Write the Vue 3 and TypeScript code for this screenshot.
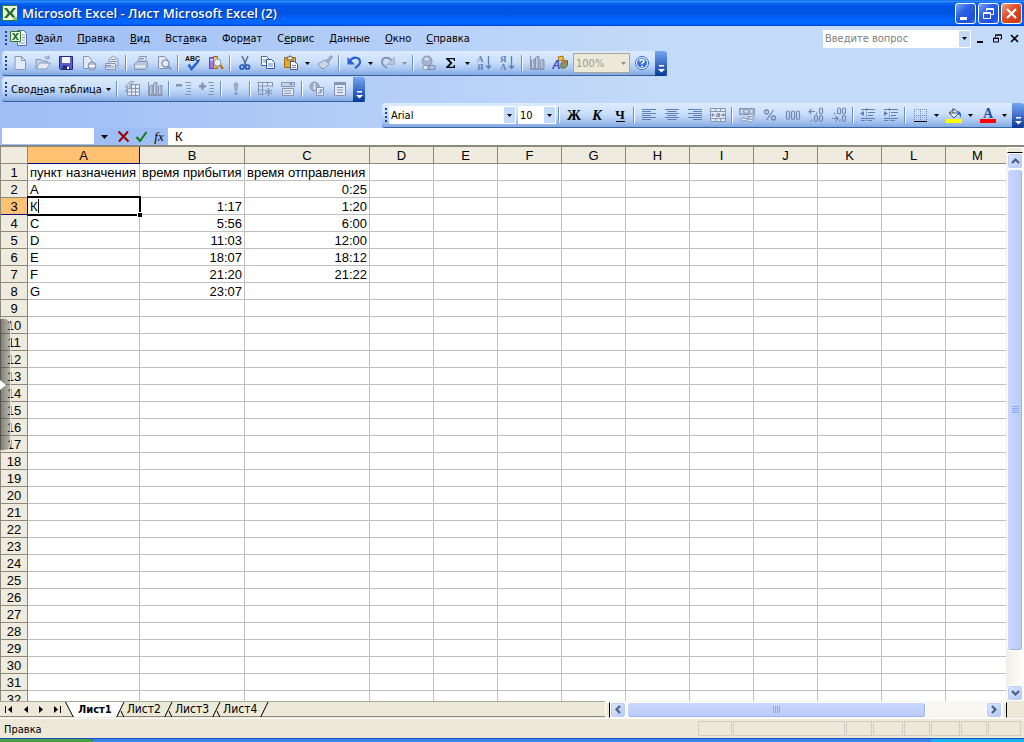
<script setup lang="ts">
import { ref } from 'vue'

interface ToolItem {
  kind: 'btn' | 'sep' | 'drop' | 'zoom' | 'font' | 'size' | 'pivot'
  icon?: string
  label?: string
  off?: boolean
}

const b = (icon: string, label: string): ToolItem => ({ kind: 'btn', icon, label })
const sep: ToolItem = { kind: 'sep' }
const drop = (off = false): ToolItem => ({ kind: 'drop', off })

const menus = [
  ['', 'Ф', 'айл'],
  ['', 'П', 'равка'],
  ['', 'В', 'ид'],
  ['Вст', 'а', 'вка'],
  ['Фор', 'м', 'ат'],
  ['С', 'е', 'рвис'],
  ['', 'Д', 'анные'],
  ['', 'О', 'кно'],
  ['', 'С', 'правка'],
]

const standard: ToolItem[] = [
  b('page', 'Создать'), b('open', 'Открыть'), b('save', 'Сохранить'), b('perm', 'Разрешения'), b('mail', 'Сообщение'), sep,
  b('print', 'Печать'), b('preview', 'Просмотр'), sep,
  b('spell', 'Орфография'), b('research', 'Справочные материалы'), sep,
  b('cut', 'Вырезать'), b('copy', 'Копировать'), b('paste', 'Вставить'), drop(), b('brush', 'Формат по образцу'), sep,
  b('undo', 'Отменить'), drop(), b('redo', 'Вернуть'), drop(true), sep,
  b('link', 'Гиперссылка'), b('sigma', 'Автосумма'), drop(), b('sortAsc', 'По возрастанию'), b('sortDesc', 'По убыванию'), sep,
  b('chart', 'Диаграмма'), b('draw', 'Рисование'), { kind: 'zoom' }, b('help', 'Справка'),
]

const pivot: ToolItem[] = [
  { kind: 'pivot' }, sep, b('pivotFormat', 'Формат отчета'), b('chart', 'Мастер диаграмм'), sep,
  b('minus', 'Скрыть детали'), b('plus', 'Отобразить детали'), sep, b('bang', 'Обновить'), sep,
  b('tableStar', 'Скрытые элементы'), b('fieldBox', 'Всегда показывать'), sep,
  b('info', 'Параметры поля'), b('listBox', 'Список полей'),
]

const format: ToolItem[] = [
  { kind: 'font' }, { kind: 'size' }, sep,
  b('bold', 'Полужирный'), b('italic', 'Курсив'), b('underline', 'Подчеркнутый'), sep,
  b('alignL', 'По левому краю'), b('alignC', 'По центру'), b('alignR', 'По правому краю'), b('merge', 'Объединить'), sep,
  b('money', 'Денежный формат'), b('percent', 'Процентный формат'), b('thousand', 'Разделители'), b('decUp', 'Увеличить разрядность'), b('decDown', 'Уменьшить разрядность'), sep,
  b('indentL', 'Уменьшить отступ'), b('indentR', 'Увеличить отступ'), sep,
  b('borders', 'Границы'), drop(), b('fill', 'Цвет заливки'), drop(), b('color', 'Цвет шрифта'), drop(),
]

const bars = [
  { name: 'standard', items: standard },
  { name: 'pivot', items: pivot },
  { name: 'format', items: format },
]

const G = '#8795b5'
const L = '#e4eaf5'
const D = '#5f7fb5'
const icons: Record<string, string> = {
  page: `<path d="M3 1.5h6.500l4 4v9H3z" fill="${L}" stroke="${G}"/><path d="M9.500 1.500v4h4" fill="none" stroke="${G}"/>`,
  open: `<path d="M1 13.500V4.500h5l1 1.500h5v2" fill="#c5d0e5" stroke="${G}"/><path d="M1 14l3.500-6h11l-4 6z" fill="${L}" stroke="${G}"/><path d="M9 3q3-3 5 0M14 .5v3h-3" fill="none" stroke="${G}"/>`,
  save: `<path d="M1.500 1.500h13v13h-12l-1-1z" fill="#5a5fd0" stroke="#26267c"/><path d="M4 2h8v6H4z" fill="#f4f6ff"/><path d="M4.500 10.500h7v4h-7z" fill="#26267c"/><path d="M9 11.500h2v2.500H9z" fill="#fff"/>`,
  perm: `<path d="M2.500 1.500h5l3 3v9h-8z" fill="${L}" stroke="${G}"/><circle cx="11" cy="11" r="4" fill="#b4c0da" stroke="${G}"/><path d="M8.500 11h5" stroke="#fff" stroke-width="2"/>`,
  mail: `<path d="M5 6V4l4.500-3L14 4v7H5z" fill="${L}" stroke="${G}"/><path d="M7 4.500h5M6 6.500h7" stroke="${G}"/><path d="M1.500 8.500h10v6h-10z" fill="#dde4f2" stroke="${G}"/><path d="M2 12h8M2 10.500h5" fill="none" stroke="${G}"/><path d="M12 11.500h3v3h-3z" fill="#b4c0da"/>`,
  print: `<path d="M5 6.500l1.500-5h7l-1.500 5z" fill="${L}" stroke="${G}"/><path d="M1.500 9l3-2.500h10V12l-2 2.500h-11z" fill="#bac5dc" stroke="${G}"/><path d="M2 10.500h10v2H2z" fill="${L}"/><path d="M7 3.500h4M6.500 5h4" stroke="${G}"/>`,
  preview: `<path d="M2.500 1.500h6l3 3v9h-9z" fill="${L}" stroke="${G}"/><circle cx="9.500" cy="8.500" r="3.500" fill="#e9effa" stroke="${G}" stroke-width="1.500"/><path d="M12 11l3 3.500" stroke="${G}" stroke-width="2"/>`,
  spell: `<text x="0" y="6" font-family="Liberation Sans, sans-serif" font-size="7" font-weight="bold" fill="#111">ABC</text><path d="M3.500 9.500l3 4.500 7-8" fill="none" stroke="#2563cf" stroke-width="2.500"/>`,
  research: `<path d="M1.500 2.500h4v11h-4z" fill="#a577e0" stroke="#6a3dac"/><path d="M5.500 1.500h4v12h-4z" fill="#e3b548" stroke="#a06d20"/><path d="M2 5h3M6 4h3" stroke="#fff"/><circle cx="9.500" cy="7.500" r="3.500" fill="#e8f4ff" stroke="#8b97a8"/><path d="M12 10l3 4" stroke="#b8761b" stroke-width="2.500"/>`,
  cut: `<path d="M5 1l4 9M11 1L7 10" stroke="#5d6f92" stroke-width="1.500"/><circle cx="5" cy="12" r="2" fill="none" stroke="#2458b8" stroke-width="1.700"/><circle cx="10.500" cy="12" r="2" fill="none" stroke="#2458b8" stroke-width="1.700"/>`,
  copy: `<path d="M1.500 1.500h5l3 3v6h-8z" fill="#fff" stroke="#4566a8"/><path d="M6.500 4.500h5l3 3v6h-8z" fill="#fff" stroke="#3558a4"/><path d="M8 9h5M8 11h5M3 5h3M3 7h3" stroke="#5f86d0"/>`,
  paste: `<path d="M1.500 2.500h11v10h-11z" fill="#e8a92c" stroke="#a36a14"/><path d="M4 2h2l1-1.500L8 2h2v3H4z" fill="#ece3c4" stroke="#6c6046"/><path d="M7.500 6.500h4l3 3v5h-7z" fill="#fff" stroke="#4a5878"/><path d="M9 10.500h4M9 12.500h4" stroke="#6a80a8"/>`,
  brush: `<path d="M9 6l5-5.500 1.500 1.500L11 8z" fill="#a9b5cf" stroke="${G}"/><path d="M8 5l4 4-5 5-1-1-1 1L1 9z" fill="#ccd5e6" stroke="${G}"/>`,
  undo: `<path d="M4 6c3-5 10-4 10 1 0 3-2 4-5 6" fill="none" stroke="#2c62cf" stroke-width="2.200"/><path d="M1.500 2v7.500H9z" fill="#2c62cf"/>`,
  redo: `<path d="M12 6C9 1 2 2 2 7c0 3 2 4 5 6" fill="none" stroke="${G}" stroke-width="2"/><path d="M14.500 2v7.500H7z" fill="#b8c3da" stroke="${G}" stroke-width=".5"/>`,
  link: `<circle cx="7" cy="6" r="5" fill="#a7b3cf" stroke="${G}"/><path d="M4 4q3-3 5 0-2 3-5 0" fill="#dde4f1"/><rect x="3" y="10.500" width="7" height="4" rx="2" fill="${L}" stroke="${G}"/><rect x="8" y="10.500" width="7" height="4" rx="2" fill="none" stroke="${G}" stroke-width="1.500"/>`,
  sigma: `<path d="M3 3h9v3h-1l-.7-1.700H6.200L9.500 8 6 11.700h4.300L11 10h1v3H3v-1l4-4-4-4z" fill="#101018"/>`,
  sortAsc: `<g fill="${D}" font-family="Liberation Serif, serif" font-size="9" font-weight="bold"><text x="0" y="7">А</text><text x="0" y="15">Я</text></g><path d="M11.500 1v12M9 10.500l2.500 3 2.500-3" fill="none" stroke="${D}" stroke-width="1.300"/>`,
  sortDesc: `<g fill="${D}" font-family="Liberation Serif, serif" font-size="9" font-weight="bold"><text x="0" y="7">Я</text><text x="0" y="15">А</text></g><path d="M11.500 1v12M9 10.500l2.500 3 2.500-3" fill="none" stroke="${D}" stroke-width="1.300"/>`,
  chart: `<path d="M1.500 1v13.500h14" stroke="${G}" fill="none"/><path d="M2.500 5.500l1.500-1h2v9h-3.500zM6.500 2.500l1.500-1h2v12H6.500zM11.500 5.500l1.500-1h2v9h-3.500z" fill="#c7d1e6" stroke="${G}"/><path d="M5 5v8M9 2v11M14 5v8" stroke="${G}"/>`,
  draw: `<path d="M6.500 1.500h5v4h-5z" fill="#f2c43a" stroke="#a0761b" transform="rotate(-12 9 4)"/><path d="M9 8l3-2.500h3.500v5L13 13H9z" fill="#8a9a64" stroke="#59684a"/><path d="M11 4l4 2-3 3" fill="#cc7044"/><text x="0" y="14" font-family="Liberation Sans, sans-serif" font-size="12" font-style="italic" font-weight="bold" fill="#4a4fc0">A</text>`,
  help: `<circle cx="8" cy="8" r="6.500" fill="#fff" stroke="#2e64ce"/><circle cx="8" cy="8" r="5" fill="#3a74e0"/><path d="M6 6.500q0-2 2-2t2 1.700c0 1.300-2 1.300-2 3M8 10.700v1.500" fill="none" stroke="#fff" stroke-width="1.600"/>`,
  pivotFormat: `<path d="M3.500 3.500h12v11h-12z" fill="${L}" stroke="${G}"/><path d="M4 7.500h11M4 11h11M7.500 4v10M11.500 4v10" stroke="${G}"/><path d="M7 0L1 6h3l-3 5 7-6H5l5-5z" fill="#d6deee" stroke="${G}"/>`,
  minus: `<path d="M0 3h6v2.500H0z" fill="${G}"/><path d="M9 1.500h6M10.500 4.500H15M10.500 7.500H15M10.500 10.500H15M9 13.500h6" stroke="${G}"/>`,
  plus: `<path d="M0 4h7v2.500H0zM2.200 1.800h2.500v7H2.200z" fill="${G}"/><path d="M9 1.500h6M10.500 4.500H15M10.500 7.500H15M10.500 10.500H15M9 13.500h6" stroke="${G}"/>`,
  bang: `<path d="M6 3q2-3 4 0L9 9.500H7z" fill="#a2b0cd" stroke="${G}" stroke-width=".7"/><circle cx="8" cy="12.500" r="1.500" fill="${G}"/>`,
  tableStar: `<path d="M1 1.500h14v4H1z" fill="${L}"/><path d="M.5 1.500h15V6M1.500 1v12.500H7M1 5h14M5.500 2v11M1 9h6M10.500 2v3" stroke="${G}" fill="none"/><path d="M11.500 7v8M8 9l7 4M8 13l7-4" stroke="${G}" stroke-width="1.400"/>`,
  fieldBox: `<path d="M1.500 1.500h13v4h-13z" fill="#c8d2e6" stroke="${G}"/><path d="M9 2.500h4l-2 2z" fill="${D}"/><path d="M2.500 7.500h11v7h-11z" fill="${L}" stroke="${G}"/><path d="M4 10h7M4 12.500h7" stroke="${G}"/>`,
  info: `<circle cx="5.500" cy="5.500" r="4.500" fill="#9eadca" stroke="${G}"/><path d="M5.500 4.500v4M5.500 2.200v1.500" stroke="#fff" stroke-width="1.500"/><path d="M7.500 6.500h7v8h-7z" fill="${L}" stroke="${G}"/><path d="M9 12h3V9M10.500 10L12 8.500l1.500 1.500" fill="none" stroke="${D}"/>`,
  listBox: `<path d="M2.500 1.500h11v13h-11z" fill="${L}" stroke="${G}"/><path d="M3 3h10" stroke="${G}" stroke-width="2"/><path d="M5 6.500h6M5 9h6M5 11.500h6" stroke="${G}"/>`,
  bold: `<text x="8" y="13" text-anchor="middle" font-family="Liberation Serif, serif" font-size="14" font-weight="bold">Ж</text>`,
  italic: `<text x="8" y="13" text-anchor="middle" font-family="Liberation Serif, serif" font-size="14" font-weight="bold" font-style="italic">К</text>`,
  underline: `<text x="8" y="12" text-anchor="middle" font-family="Liberation Serif, serif" font-size="13" font-weight="bold">Ч</text><path d="M4 14.500h9" stroke="#111"/>`,
  alignL: `<path d="M1 2.500h14M1 4.500h9M1 6.500h14M1 8.500h9M1 10.500h14M1 12.500h9" stroke="${D}"/>`,
  alignC: `<path d="M1 2.500h14M3.500 4.500h9M1 6.500h14M3.500 8.500h9M1 10.500h14M3.500 12.500h9" stroke="${D}"/>`,
  alignR: `<path d="M1 2.500h14M6 4.500h9M1 6.500h14M6 8.500h9M1 10.500h14M6 12.500h9" stroke="${D}"/>`,
  merge: `<path d="M.5 1.500h15v13H.5z" fill="${L}" stroke="${G}"/><path d="M.5 4.500h15M.5 11.500h15M5.500 1v3M10.500 1v3M5.500 12v3M10.500 12v3" stroke="${G}"/><path d="M1 8h4M11 8h4M2.500 6.500v3M13.500 6.500v3" stroke="${D}"/><text x="8" y="10" text-anchor="middle" font-family="Liberation Serif, serif" font-size="9" font-weight="bold" fill="${D}">a</text>`,
  money: `<path d="M.5 1.500h15v6H.5z" fill="#a9b8d6" stroke="${G}"/><circle cx="7" cy="4.500" r="2" fill="${L}" stroke="${G}"/><path d="M2.500 3v3M12.500 3v3" stroke="${L}"/><ellipse cx="12" cy="8.500" rx="3" ry="1.500" fill="${L}" stroke="${G}"/><ellipse cx="12" cy="11" rx="3" ry="1.500" fill="${L}" stroke="${G}"/><ellipse cx="11" cy="13.500" rx="3" ry="1.500" fill="${L}" stroke="${G}"/><ellipse cx="5" cy="12.500" rx="3" ry="1.500" fill="${L}" stroke="${G}"/>`,
  percent: `<circle cx="4.500" cy="5" r="2" fill="none" stroke="#7387b0" stroke-width="1.300"/><circle cx="11.500" cy="11" r="2" fill="none" stroke="#7387b0" stroke-width="1.300"/><path d="M11.500 3l-7 10" stroke="#7387b0" stroke-width="1.300"/>`,
  thousand: `<g fill="none" stroke="#7387b0" stroke-width="1.200"><rect x="1.500" y="4" width="3" height="8.500" rx="1.500"/><rect x="6.500" y="4" width="3" height="8.500" rx="1.500"/><rect x="11.500" y="4" width="3" height="8.500" rx="1.500"/></g>`,
  decUp: `<g fill="none" stroke="#7387b0" stroke-width="1.200"><path d="M1 4.500h6M3.500 2L1 4.500 3.500 7M9 5.500L8 7.500M4 12.500l-1 2"/><rect x="11.500" y="1" width="3" height="6" rx="1.500"/><rect x="6.500" y="8.500" width="3" height="6" rx="1.500"/><rect x="11.500" y="8.500" width="3" height="6" rx="1.500"/></g>`,
  decDown: `<g fill="none" stroke="#7387b0" stroke-width="1.200"><path d="M1 11.500h6M4.500 9L7 11.500 4.500 14M4 5.500l-1 2M9.500 12.500l-1 2"/><rect x="6.500" y="1" width="3" height="6" rx="1.500"/><rect x="11.500" y="1" width="3" height="6" rx="1.500"/><rect x="11.500" y="8.500" width="3" height="6" rx="1.500"/></g>`,
  indentL: `<path d="M1 2.500h14M8 5.500h7M8 8.500h5M1 11.500h14M1 13.500h4M8 13.500h4" stroke="${D}"/><path d="M4 4v5L0 6.500z" fill="${D}"/><path d="M6.500 1v14" stroke="${D}" stroke-dasharray="1 1"/>`,
  indentR: `<path d="M1 2.500h14M8 5.500h7M8 8.500h5M1 11.500h14M1 13.500h4M8 13.500h4" stroke="${D}"/><path d="M1 4v5l4-2.500z" fill="${D}"/><path d="M6.500 1v14" stroke="${D}" stroke-dasharray="1 1"/>`,
  borders: `<path d="M2 2.500h13M2 8.500h13M2.500 2v12M8.500 2v12M14.500 2v12" stroke="#7286ac" stroke-dasharray="1 1"/><path d="M2 14.500h13" stroke="#000"/>`,
  fill: `<path d="M3 6l5-4 5 4-5 5z" fill="#e6edf6" stroke="#44566e"/><path d="M7 1v5M3 6h9" stroke="#44566e"/><path d="M12 4q4 1 3 7-1-3-3-4" fill="#2f66c6"/><path d="M0 12h16v4H0z" fill="#ff0"/>`,
  color: `<text x="8" y="11" text-anchor="middle" font-family="Liberation Serif, serif" font-size="14" font-weight="bold" fill="#27509c">A</text><path d="M0 12h16v4H0z" fill="#f00"/>`,
}

const columns = [
  { name: 'A', width: 112 },
  { name: 'B', width: 105 },
  { name: 'C', width: 125 },
  ...'DEFGHIJKLM'.split('').map((name) => ({ name, width: 64 })),
]
const tableWidth = 27 + columns.reduce((sum, c) => sum + c.width, 0)

const data: string[][] = [
  ['пункт назначения', 'время прибытия', 'время отправления'],
  ['A', '', '0:25'],
  ['', '1:17', '1:20'],
  ['C', '5:56', '6:00'],
  ['D', '11:03', '12:00'],
  ['E', '18:07', '18:12'],
  ['F', '21:20', '21:22'],
  ['G', '23:07', ''],
]
const cell = (r: number, c: number): string => data[r - 1]?.[c] ?? ''
const entry = ref('К')
const query = ref('')
const nameBox = ref('')
const sheets = ['Лист1', 'Лист2', 'Лист3', 'Лист4']
const panes = [34, 112, 26, 30, 26, 29, 26, 33]
const navs = [
  { label: 'Первый лист', d: 'M1 1h1v7H1zM8 1v7L4 4.500z' },
  { label: 'Предыдущий лист', d: 'M7 1v7L3 4.500z' },
  { label: 'Следующий лист', d: 'M2 1v7l4-3.500z' },
  { label: 'Последний лист', d: 'M7 1h1v7H7zM1 1v7l4-3.500z' },
]
</script>

<template>
  <div class="app">
    <header class="title">
      <svg class="logo" width="16" height="16" viewBox="0 0 16 16">
        <path d="M.5.5h15v15H.5z" fill="#e9f5df" stroke="#2f7d32" />
        <path d="M2 3h3l3 4 3-4h3l-4 5 4 5h-3L8 9.500 5 13H2l4-5z" fill="#226f2c" />
        <path d="M11 12h4v3h-4z" fill="#8cc47c" />
      </svg>
      <h1>Microsoft Excel - Лист Microsoft Excel (2)</h1>
      <div class="winbtns">
        <button aria-label="Свернуть"><svg width="19" height="19"><path d="M4 13h7v3H4z" fill="#fff" /></svg></button>
        <button aria-label="Восстановить">
          <svg width="19" height="19" fill="none" stroke="#fff"><path d="M7.500 7V4.500h7v6H12M7 5.500h8M4.500 8.500h7v6h-7zM4 9.500h8" /></svg>
        </button>
        <button class="close" aria-label="Закрыть">
          <svg width="19" height="19"><path d="M5 5l9 9M14 5l-9 9" stroke="#fff" stroke-width="2.200" /></svg>
        </button>
      </div>
    </header>

    <nav class="menubar">
      <i class="grip"></i>
      <svg class="doc" width="18" height="17" viewBox="0 0 18 17">
        <path d="M7.500.5h6l3 3v12h-9z" fill="#fff" stroke="#5372ac" />
        <path d="M12 5h3M12 7.500h3M12 10h3M9 13h6" stroke="#7894c8" />
        <path d="M.5 1.500h10v10H.5z" fill="#eaf6e4" stroke="#2f7d32" />
        <path d="M2 3h2l1.500 2L7 3h2L6.500 6.500 9 10H7L5.500 8 4 10H2l2.500-3.500z" fill="#226f2c" />
      </svg>
      <button v-for="m in menus" :key="m.join('')" class="menu">{{ m[0] }}<u>{{ m[1] }}</u>{{ m[2] }}</button>
      <div class="ask">
        <input v-model="query" placeholder="Введите вопрос" aria-label="Введите вопрос" />
        <button aria-label="Список вопросов"><svg width="5" height="3"><path d="M0 0h5L2.500 3z" /></svg></button>
      </div>
      <div class="docbtns">
        <button aria-label="Свернуть окно"><svg width="9" height="9"><path d="M1 7h6v2H1z" /></svg></button>
        <button aria-label="Восстановить окно">
          <svg width="9" height="9"><path d="M2.500 3V1h6v4H7M.5 4h5v4h-5zM0 4.500h6M2 1h7" fill="none" stroke="#000" /></svg>
        </button>
        <button aria-label="Закрыть окно">
          <svg width="9" height="9"><path d="M1 1l7 7M8 1L1 8" stroke="#000" stroke-width="1.600" /></svg>
        </button>
      </div>
    </nav>

    <div v-for="bar in bars" :key="bar.name" class="toolrow">
      <div class="toolbar" :class="bar.name" role="toolbar">
        <i class="grip"></i>
        <template v-for="(t, i) in bar.items" :key="i">
          <button v-if="t.kind === 'btn'" class="tool" :aria-label="t.label">
            <svg width="16" height="16" viewBox="0 0 16 16" v-html="icons[t.icon ?? '']"></svg>
          </button>
          <i v-else-if="t.kind === 'sep'" class="sep"></i>
          <button v-else-if="t.kind === 'drop'" class="drop" :class="{ off: t.off }" aria-label="Еще">
            <svg width="5" height="3"><path d="M0 0h5L2.500 3z" /></svg>
          </button>
          <button v-else-if="t.kind === 'pivot'" class="pivotbtn">
            <span>Свод<u>н</u>ая таблица</span><svg width="5" height="3"><path d="M0 0h5L2.500 3z" /></svg>
          </button>
          <div v-else class="combo" :class="t.kind">
            <select :disabled="t.kind === 'zoom'" :aria-label="t.kind">
              <option>{{ t.kind === 'zoom' ? '100%' : t.kind === 'font' ? 'Arial' : '10' }}</option>
            </select>
            <span class="arrow"><svg width="5" height="3"><path d="M0 0h5L2.500 3z" /></svg></span>
          </div>
        </template>
        <button class="cap" aria-label="Параметры панели">
          <svg width="7" height="8"><path d="M1 .5h5" stroke="#fff" stroke-width="2" /><path d="M0 4h7L3.500 7.500z" fill="#fff" /></svg>
        </button>
      </div>
    </div>

    <div class="formula">
      <input v-model="nameBox" class="namebox" aria-label="Имя" />
      <button class="fdrop" aria-label="Список имен"><svg width="7" height="4"><path d="M0 0h7L3.500 4z" /></svg></button>
      <button class="fbtn" aria-label="Отмена">
        <svg width="13" height="13"><path d="M1.500 1.500l10 10M11 1.500l-9 10" stroke="#900" stroke-width="2" fill="none" /></svg>
      </button>
      <button class="fbtn" aria-label="Ввод">
        <svg width="13" height="13"><path d="M1.500 7l3.500 4L11.500 2" stroke="#0a7d0a" stroke-width="2" fill="none" /></svg>
      </button>
      <button class="fbtn fx" aria-label="Вставка функции">fx</button>
      <input v-model="entry" class="fx-input" aria-label="Строка формул" />
    </div>

    <main class="sheet">
      <div class="gridwrap">
        <table class="grid" :style="{ width: tableWidth + 'px' }">
          <colgroup>
            <col class="rowcol" />
            <col v-for="c in columns" :key="c.name" :style="{ width: c.width + 'px' }" />
          </colgroup>
          <thead>
            <tr>
              <th></th>
              <th v-for="c in columns" :key="c.name" :class="{ on: c.name === 'A' }">{{ c.name }}</th>
            </tr>
          </thead>
          <tbody>
            <tr v-for="r in 32" :key="r">
              <th :class="{ on: r === 3 }">{{ r }}</th>
              <td v-for="(c, ci) in columns" :key="c.name" :class="{ num: ci > 0 && r > 1, active: r === 3 && ci === 0 }">
                <template v-if="r === 3 && ci === 0">
                  <input v-model="entry" aria-label="Ячейка A3" /><i class="caret"></i><i class="knob"></i>
                </template>
                <template v-else>{{ cell(r, ci) }}</template>
              </td>
            </tr>
          </tbody>
        </table>
      </div>
      <div class="vscroll">
        <i class="vsplit"></i>
        <button class="sb" aria-label="Вверх"><svg width="9" height="6"><path d="M1 5l3.500-3.500L8 5" /></svg></button>
        <div class="vthumb"><svg width="7" height="8"><path d="M0 .5h7M0 2.500h7M0 4.500h7M0 6.500h7" stroke="#8caaf0" /></svg></div>
        <div class="vtrack"></div>
        <button class="sb" aria-label="Вниз"><svg width="9" height="6"><path d="M1 1l3.500 3.500L8 1" /></svg></button>
      </div>
      <button class="handle" aria-label="Показать панель"><svg width="6" height="10"><path d="M0 0l6 5-6 5z" fill="#fff" /></svg></button>
    </main>

    <div class="bottom">
      <div class="tabs">
        <button v-for="n in navs" :key="n.label" class="nav" :aria-label="n.label">
          <svg width="9" height="9"><path :d="n.d" /></svg>
        </button>
        <svg class="edge" width="10" height="16"><path d="M1 0l8 15h1V0z" fill="#fff" /><path d="M.5 0l8 15.500H10" fill="none" stroke="#000" /></svg>
        <template v-for="(s, i) in sheets" :key="s">
          <button class="tab" :class="{ current: i === 0 }">{{ s }}</button>
          <svg class="edge" width="10" height="16">
            <path v-if="i === 0" d="M0 0h9L1 15H0z" fill="#fff" />
            <path d="M0 15.500h1.500L9 0" fill="none" stroke="#000" />
            <path v-if="i < 3" d="M6 9l3 6.500h1" fill="none" stroke="#000" />
          </svg>
        </template>
      </div>
      <div class="hscroll">
        <i class="hsplit"></i>
        <button class="sb" aria-label="Влево"><svg width="6" height="9"><path d="M5 1L1.500 4.500 5 8" /></svg></button>
        <div class="hthumb"><svg width="8" height="7"><path d="M.5 0v7M2.500 0v7M4.500 0v7M6.500 0v7" stroke="#8caaf0" /></svg></div>
        <div class="htrack"></div>
        <button class="sb" aria-label="Вправо"><svg width="6" height="9"><path d="M1 1l3.500 3.500L1 8" /></svg></button>
        <i class="hsplit"></i>
      </div>
      <div class="corner"></div>
    </div>

    <footer class="status">
      <span class="mode">Правка</span>
      <i v-for="(w, i) in panes" :key="i" :style="{ width: w + 'px' }"></i>
    </footer>
    <div class="taskbar"><i class="start"></i><i class="tasks"></i><i class="tray"></i></div>
  </div>
</template>

<style>
html,
body {
  margin: 0;
  height: 100%;
  overflow: hidden;
}
</style>

<style scoped>
.app {
  display: flex;
  flex-direction: column;
  height: 100vh;
  background: linear-gradient(90deg, #9ebef5, #c4daf9 65%);
  font: 11px/13px 'DejaVu Sans Condensed', 'DejaVu Sans', sans-serif;
  color: #000;
}
.app * {
  box-sizing: border-box;
}
button {
  display: flex;
  align-items: center;
  justify-content: center;
  flex: none;
  margin: 0;
  padding: 0;
  border: 0;
  background: none;
  font: inherit;
  color: inherit;
}
input,
select {
  margin: 0;
  padding: 0;
  border: 0;
  border-radius: 0;
  outline: 0;
  font: inherit;
  color: inherit;
  appearance: none;
  background: #fff;
}
svg {
  display: block;
  flex: none;
}

.title {
  display: flex;
  align-items: center;
  flex: none;
  height: 26px;
  padding: 0 2px 0 2px;
  background: linear-gradient(#0058e6 0, #3a93ff 1px, #0a6af5 3px, #0054e3 6px, #0055e5 14px, #0066ff 20px, #0066fe 24px, #003dd0 26px);
}
h1 {
  flex: 1;
  margin: 0 0 0 4px;
  font: 600 13px/16px 'Open Sans', 'Noto Sans', sans-serif;
  color: #fff;
  text-shadow: 1px 1px #0a2c8c;
  white-space: nowrap;
}
.winbtns {
  display: flex;
  gap: 2px;
}
.winbtns button {
  width: 21px;
  height: 21px;
  border: 1px solid #fff;
  border-radius: 3px;
  background: linear-gradient(135deg, #7ba2f2, #2c60e2 40%, #1e50dc 80%, #3d74f0);
}
.winbtns .close {
  background: linear-gradient(135deg, #f0a088, #e0512c 40%, #cc3a10 85%, #e06840);
}

.menubar {
  display: flex;
  align-items: center;
  flex: none;
  height: 25px;
  padding-left: 5px;
}
.grip {
  flex: none;
  width: 3px;
  height: 15px;
  background:
    repeating-linear-gradient(#27418a 0 2px, transparent 2px 4px) 0 0 / 2px 15px no-repeat;
}
.doc {
  margin: 0 0 0 2px;
}
.menu {
  padding: 0 7px 0 8px;
  height: 19px;
}
.menu:first-of-type {
  padding-left: 7px;
}
.ask {
  display: flex;
  width: 148px;
  height: 18px;
  margin-left: auto;
  padding: 1px;
  background: #fff;
}
.ask input {
  flex: 1;
  min-width: 0;
  padding-left: 1px;
}
.ask input::placeholder {
  color: #808080;
  opacity: 1;
}
.ask button,
.arrow {
  display: flex;
  align-items: center;
  justify-content: center;
  width: 11px;
  background: #c4daf9;
}
.docbtns {
  display: flex;
  gap: 8px;
  padding: 0 5px;
}

.toolrow {
  display: flex;
  flex: none;
  height: 26px;
}
.toolbar {
  display: flex;
  align-items: center;
  height: 25px;
  margin-left: 2px;
  padding-left: 3px;
  border-bottom: 1px solid #3b619c;
  border-radius: 4px 3px 0 3px;
  background: linear-gradient(#ddebfe, #c9dffb 45%, #a9c6f1 75%, #81a9e2);
}
.toolbar.format {
  margin-left: auto;
}
.tool {
  width: 23px;
  height: 22px;
}
.drop {
  width: 11px;
  height: 22px;
}
.drop.off {
  fill: #8d8d8d;
}
.sep {
  flex: none;
  width: 6px;
  height: 16px;
  background: linear-gradient(90deg, #6a8ccb 50%, #fff 50%) 2px 0 / 2px 16px no-repeat;
}
.combo {
  display: flex;
  position: relative;
  height: 18px;
  margin-left: 2px;
}
.combo select {
  width: 100%;
  padding-left: 2px;
}
.combo .arrow {
  position: absolute;
  right: 1px;
  top: 1px;
  bottom: 1px;
  pointer-events: none;
}
.combo.font {
  width: 127px;
  margin-left: 1px;
}
.combo.size {
  width: 38px;
}
.combo.zoom {
  width: 57px;
  height: 20px;
}
.combo.zoom select {
  border: 1px solid #aca899;
  background: #ece9d8;
  color: #9c9a8c;
  opacity: 1;
}
.combo.zoom .arrow {
  background: none;
  fill: #8d8d8d;
}
.pivotbtn {
  gap: 4px;
  width: 106px;
  height: 22px;
  white-space: nowrap;
}
.cap {
  align-items: flex-end;
  align-self: stretch;
  width: 12px;
  height: 25px;
  margin-left: 2px;
  padding-bottom: 3px;
  border-radius: 0 3px 3px 0;
  background: linear-gradient(#75a6f1, #3f6fc8 50%, #053995);
}

.formula {
  display: flex;
  flex: none;
  height: 17px;
  margin-top: -1px;
  background: #9ebef5;
}
.namebox {
  width: 92px;
  height: 16px;
  margin-left: 2px;
}
.fdrop {
  width: 20px;
}
.fbtn {
  width: 18px;
}
.fx {
  font: italic 13px/14px 'Liberation Serif', serif;
}
.fx-input {
  flex: 1;
  min-width: 0;
  padding-left: 7px;
  font: 13px/16px 'Liberation Sans', sans-serif;
}

.sheet {
  display: flex;
  position: relative;
  flex: 1;
  min-height: 0;
  border-top: 2px solid #8b897c;
  background: #ece9d8;
}
.gridwrap {
  flex: 1;
  min-width: 0;
  overflow: hidden;
  border-left: 1px solid #8b897c;
  background: #fff;
}
.grid {
  table-layout: fixed;
  border-collapse: separate;
  border-spacing: 0;
  font: 13px/14px 'Liberation Sans', sans-serif;
}
.rowcol {
  width: 27px;
}
th,
td {
  height: 17px;
  padding: 2px 2px 0;
  border-right: 1px solid #c0c0c0;
  border-bottom: 1px solid #c0c0c0;
  white-space: nowrap;
  text-align: left;
}
th {
  padding: 2px 0 0;
  border-color: #8b897c;
  background: #efebde;
  font-weight: 400;
  text-align: center;
}
th.on {
  border-color: #0a0a80;
  background: #ffc172;
}
.num {
  text-align: right;
}
.active {
  position: relative;
}
.active::after {
  content: '';
  position: absolute;
  inset: -2px -2px -2px -1px;
  border: 2px solid #000;
  border-left-width: 1px;
  pointer-events: none;
}
.active input {
  display: block;
  width: 100%;
  height: 14px;
}
.caret {
  position: absolute;
  left: 10px;
  top: 1px;
  width: 1px;
  height: 14px;
  background: #000;
}
.knob {
  position: absolute;
  right: -3px;
  bottom: -3px;
  z-index: 1;
  width: 5px;
  height: 5px;
  border: 1px solid #fff;
  border-right: 0;
  border-bottom: 0;
  background: #000;
}
.handle {
  position: absolute;
  left: 0;
  top: 171px;
  width: 11px;
  height: 133px;
  justify-content: flex-start;
  border: 1px solid #dddbd2;
  border-left: 0;
  border-radius: 0 7px 7px 0;
  background: linear-gradient(90deg, rgba(60, 60, 55, 0.65), rgba(90, 90, 85, 0.35));
}

.sb {
  width: 16px;
  height: 16px;
  border: 1px solid #fff;
  border-radius: 3px;
  background: linear-gradient(135deg, #dce6ff, #b4c8f6);
  box-shadow: inset 0 0 0 1px #bccdf8;
}
.sb svg {
  fill: none;
  stroke: #4d6185;
  stroke-width: 2.2;
}
.vscroll {
  display: flex;
  flex-direction: column;
  align-items: center;
  flex: none;
  width: 18px;
  background: linear-gradient(90deg, #f0efe6, #fefefb);
}
.vsplit {
  flex: none;
  width: 16px;
  height: 6px;
  border: 1px solid #fff;
  border-bottom: 1px solid #000;
  background: #ece9d8;
}
.vthumb,
.hthumb {
  display: flex;
  align-items: center;
  justify-content: center;
  border: 1px solid #fff;
  border-radius: 3px;
  background: linear-gradient(90deg, #cad8fd, #b9cbfa);
  box-shadow: inset -1px -1px #9db5ee;
}
.vthumb {
  flex: 482;
  width: 16px;
}
.vtrack {
  flex: 34;
}

.bottom {
  display: flex;
  flex: none;
  height: 18px;
  border-bottom: 1px solid #fff;
  background: #ece9d8;
}
.tabs {
  display: flex;
  flex: 605;
  min-width: 0;
  height: 16px;
  border-top: 1px solid #aca899;
  border-bottom: 1px solid #8b897c;
}
.nav {
  width: 16px;
  height: 15px;
}
.nav:first-child {
  width: 17px;
}
.edge {
  height: 15px;
}
.tab {
  height: 15px;
  padding: 0 2px;
  font-size: 12px;
}
.tab.current {
  padding: 0 3px;
  background: #fff;
  font-weight: 700;
  font-size: 11px;
}
.hscroll {
  display: flex;
  align-items: center;
  flex: 402;
  background: #f7f6f0;
}
.hsplit {
  flex: none;
  width: 5px;
  height: 16px;
  border: 1px solid #fff;
  border-right: 1px solid #000;
  background: #ece9d8;
}
.hthumb {
  flex: 298;
  height: 16px;
  margin-left: 1px;
  background: linear-gradient(#cad8fd, #b9cbfa);
}
.htrack {
  flex: 60;
}
.corner {
  flex: none;
  width: 17px;
}

.status {
  display: flex;
  align-items: center;
  gap: 1px;
  flex: none;
  height: 19px;
  padding-right: 3px;
  background: #ece9d8;
}
.mode {
  flex: 1;
  padding: 2px 0 0 4px;
}
.status i {
  height: 15px;
  border: 1px solid #cfcdc4;
}
.taskbar {
  display: flex;
  flex: none;
  height: 4px;
  background: #1c4fc0;
  padding-top: 1px;
}
.start {
  width: 93px;
  border-radius: 0 4px 0 0;
  background: #4a9e48;
}
.tasks {
  flex: 1;
  background: #3a83ea;
}
.tray {
  width: 93px;
  background: #18b4f0;
}
</style>
